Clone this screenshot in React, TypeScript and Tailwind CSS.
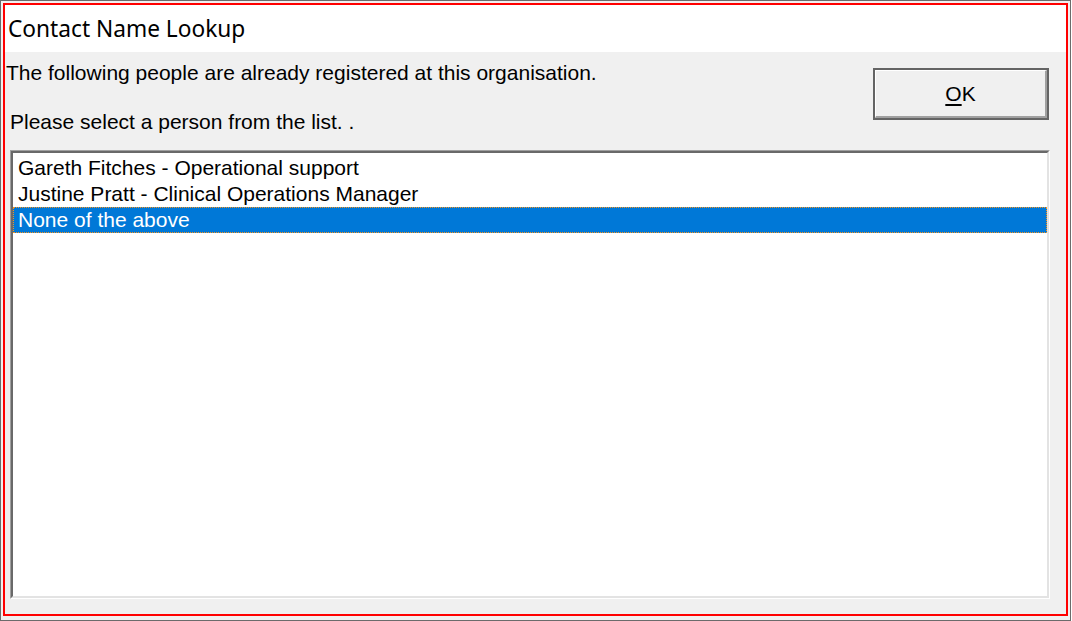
export default function App() {
  const people = [
    'Gareth Fitches - Operational support',
    'Justine Pratt - Clinical Operations Manager',
    'None of the above',
  ];
  const selected = 2;

  return (
    <div className="w-[1071px] h-[621px] bg-[#f0f0f0] border border-[#6b6b6b] pt-[2px] pl-[2px] pr-[2px] pb-[3px] font-['Liberation_Sans',Arial,sans-serif] text-black">
      <div className="w-[1065px] h-[613px] border-2 border-[#ff0000] flex flex-col">
        {/* Title */}
        <div className="h-[47px] bg-white pl-[3px] flex items-center">
          <span className="font-['Noto_Sans',sans-serif] text-[22.7px] leading-none pt-[2px]">Contact Name Lookup</span>
        </div>

        {/* Body */}
        <div className="flex-1 bg-[#f0f0f0] flex flex-col">
          <div className="h-[98px] flex">
            <div className="flex-1">
              <div className="pl-[1px] pt-[9px] text-[21px] leading-[24px]">
                The following people are already registered at this organisation.
              </div>
              <div className="pl-[5px] pt-[25px] text-[21px] leading-[24px]">
                Please select a person from the list. .
              </div>
            </div>
            <div className="pt-[16px] pr-[17px]">
              <button className="w-[176px] h-[52px] border-2 border-[#646464] bg-[#f0f0f0] flex">
                <span className="flex-1 border-t border-l border-white border-b-2 border-r-2 border-b-[#a0a0a0] border-r-[#a0a0a0] flex items-center justify-center text-[21px]">
                  <span>
                    <span className="underline underline-offset-[3px]">O</span>K
                  </span>
                </span>
              </button>
            </div>
          </div>

          {/* List */}
          <div className="ml-[5px] w-[1040px] h-[449px] border-t border-l border-t-[#a0a0a0] border-l-[#a0a0a0] border-b border-r border-b-white border-r-white">
            <div className="w-full h-full border-t-2 border-l-2 border-t-[#696969] border-l-[#696969] border-b-2 border-r-2 border-b-[#e3e3e3] border-r-[#e3e3e3] bg-white pt-[2px] text-[21px]">
              {people.map((p, i) => (
                <div
                  key={p}
                  className={
                    i === selected
                      ? 'h-[26px] leading-[24px] pl-[4px] bg-[#0078d7] text-white border border-dotted border-[#f7941d]'
                      : 'h-[26px] leading-[26px] pl-[5px]'
                  }
                >
                  {p}
                </div>
              ))}
            </div>
          </div>
        </div>
      </div>
    </div>
  );
}
